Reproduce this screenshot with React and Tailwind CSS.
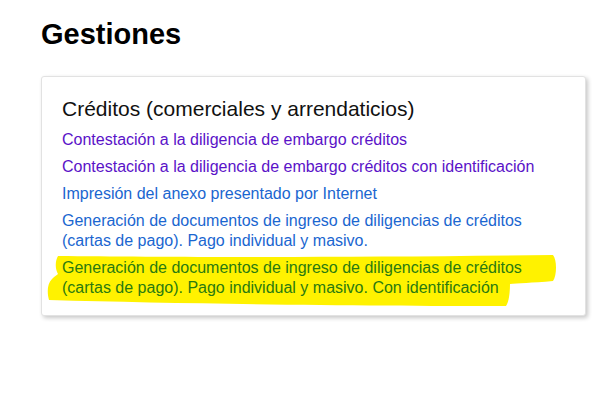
export default function App() {
  const font = { fontFamily: '"Liberation Sans", Arial, sans-serif' };
  return (
    <div className="w-[600px] h-[394px] bg-white overflow-hidden" style={font}>
      <div className="pt-[17px] pl-[41px] pr-[14px]">
        <h1 className="text-[29px] leading-[34px] font-bold text-black">Gestiones</h1>
        <div className="relative mt-[25px] w-[545px] h-[240px] border border-[#e2e2e2] rounded-[3px] bg-white shadow-[2px_2px_4px_rgba(0,0,0,0.22)] pl-[20px] pt-[19px]">
          <svg className="absolute left-0 top-0" width="545" height="240" viewBox="0 0 545 240">
            <path
              d="M16 179 C120 180 300 181 511 178 C515 183 515 198 511 204 C490 206 475 206 468 207 C468 215 467 225 464 229 C330 229 150 227 7 223 C5 216 5 207 10 202 C13 199 15 198 16 197 C13 192 13 184 16 179 Z"
              fill="#fff200"
            />
          </svg>
          <div className="relative">
            <h2 className="text-[21px] leading-[26px] text-[#111]">Créditos (comerciales y arrendaticios)</h2>
            <ul className="mt-[8px] flex flex-col gap-[7px] text-[16px] leading-[20px]">
              <li className="text-[#5a12c8]">Contestación a la diligencia de embargo créditos</li>
              <li className="text-[#5a12c8]">Contestación a la diligencia de embargo créditos con identificación</li>
              <li className="text-[#1a66d0]">Impresión del anexo presentado por Internet</li>
              <li className="text-[#1a66d0]">Generación de documentos de ingreso de diligencias de créditos<br />(cartas de pago). Pago individual y masivo.</li>
              <li className="text-[#2a7a10]">Generación de documentos de ingreso de diligencias de créditos<br />(cartas de pago). Pago individual y masivo. Con identificación</li>
            </ul>
          </div>
        </div>
      </div>
    </div>
  );
}
